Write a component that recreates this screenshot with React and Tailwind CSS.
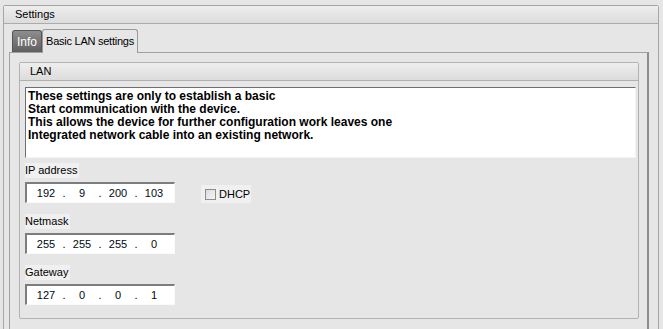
import { useState } from 'react';

function IpField({ parts }) {
  return (
    <div className="flex h-[21px] w-[150px] items-center border-t-2 border-l-2 border-b border-r border-t-[#7d7d7d] border-l-[#7d7d7d] border-b-[#fafafa] border-r-[#fafafa] bg-white pl-[4px]">
      {parts.map((p, i) => (
        <div key={i} className="flex items-center">
          <span className="w-[30px] text-center leading-[17px] text-[#000814]">{p}</span>
          {i < parts.length - 1 && <span className="w-[6px] text-center leading-[17px]">.</span>}
        </div>
      ))}
    </div>
  );
}

function FieldLabel({ children }) {
  return (
    <div className="h-[15px] w-fit bg-[#f0f0f0] pr-[2px] leading-[15px]">{children}</div>
  );
}

export default function App() {
  const [dhcp, setDhcp] = useState(false);

  return (
    <div className="h-[329px] w-[663px] overflow-hidden bg-[#e6e6e6] pt-[5px] pl-[3px] pr-[4px] font-['Liberation_Sans',Arial,sans-serif] text-[11px] text-black">
      <div className="h-[340px] rounded-t-[2px] border border-[#a6a6a6]">
        <div className="h-[18px] border-b border-[#ababab] bg-gradient-to-b from-[#eeeeee] to-[#dcdcdc] pl-[11px] leading-[17px]">
          Settings
        </div>

        <div className="pl-[5px] pr-[9px] pt-[5px]">
          {/* tabs */}
          <div className="flex h-[23px] items-end pl-[3px]">
            <div className="flex h-[22px] w-[30px] items-center justify-center rounded-t-[3px] border border-b-0 border-[#555555] bg-gradient-to-b from-[#8e8e8e] to-[#5f5f5f] text-[12px] text-white">
              Info
            </div>
            <div className="relative z-10 -mb-px flex h-[24px] w-[96px] items-center justify-center rounded-t-[3px] border border-b-0 border-[#9a9a9a] bg-[#e6e6e6] text-[11px] tracking-[-0.25px]">
              Basic LAN settings
            </div>
          </div>

          {/* tab page */}
          <div className="border border-[#a0a0a0] border-r-2 border-r-[#8c8c8c] pt-[9px] pl-[9px] pr-[8px] pb-[20px]">
            <div className="rounded-[2px] border border-[#b2b2b2]">
              <div className="h-[18px] border-b border-[#b0b0b0] bg-gradient-to-b from-[#eeeeee] to-[#dcdcdc] pl-[10px] leading-[17px]">
                LAN
              </div>
              <div className="pl-[5px] pr-[2px] pt-[6px] pb-[13px]">
                <div className="h-[71px] border border-t-[#6e6e6e] border-l-[#6e6e6e] border-b-[#f4f4f4] border-r-[#f4f4f4] bg-white pl-[2px] pt-[2px] text-[12px] font-bold leading-[13px]">
                  <div>These settings are only to establish a basic</div>
                  <div>Start communication with the device.</div>
                  <div>This allows the device for further configuration work leaves one</div>
                  <div>Integrated network cable into an existing network.</div>
                </div>

                <div className="mt-[5px]">
                  <FieldLabel>IP address</FieldLabel>
                  <div className="mt-[4px] flex items-start">
                    <IpField parts={['192', '9', '200', '103']} />
                    <label
                      className="ml-[26px] mt-[3px] flex h-[18px] w-[50px] cursor-default items-center bg-[#f0f0f0] pl-[4px]"
                      onClick={() => setDhcp(!dhcp)}
                    >
                      <span className="flex h-[11px] w-[11px] items-center justify-center border border-[#8e8e8e] bg-gradient-to-br from-[#dcdcdc] to-[#f6f6f6] text-[9px] leading-none">
                        {dhcp ? '✓' : ''}
                      </span>
                      <span className="ml-[3px]">DHCP</span>
                    </label>
                  </div>
                </div>

                <div className="mt-[11px]">
                  <FieldLabel>Netmask</FieldLabel>
                  <div className="mt-[4px]">
                    <IpField parts={['255', '255', '255', '0']} />
                  </div>
                </div>

                <div className="mt-[11px]">
                  <FieldLabel>Gateway</FieldLabel>
                  <div className="mt-[4px]">
                    <IpField parts={['127', '0', '0', '1']} />
                  </div>
                </div>
              </div>
            </div>
          </div>
        </div>
      </div>
    </div>
  );
}
